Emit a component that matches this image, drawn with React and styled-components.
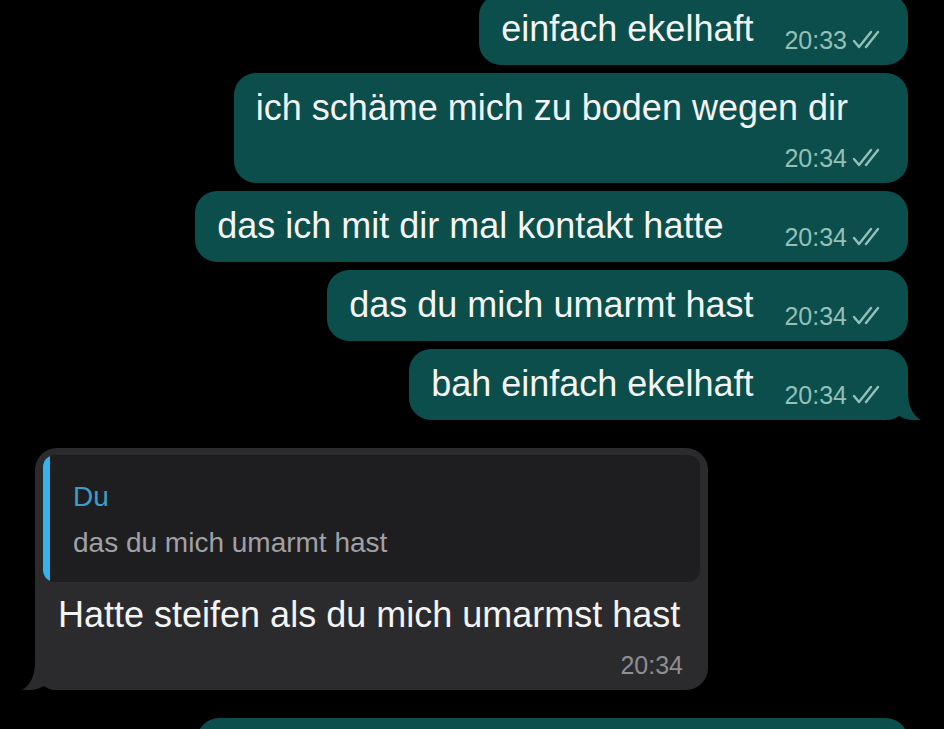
import React from 'react';
import styled, { createGlobalStyle } from 'styled-components';

const Global = createGlobalStyle`
  html, body {
    margin: 0;
    padding: 0;
    background: #000;
    height: 729px;
    overflow: hidden;
  }
  body {
    font-family: "Liberation Sans", Arial, sans-serif;
    -webkit-font-smoothing: antialiased;
  }
`;

// chat column
const Chat = styled.div`
  display: flex;
  flex-direction: column;
  gap: 8px;
  margin-top: -6px;
  padding: 0 36px 0 22px;
`;

const Row = styled.div`
  display: flex;
  justify-content: ${p => (p.$in ? 'flex-start' : 'flex-end')};
  margin-top: ${p => p.$spaced ? '20px' : '0'};
`;

// outgoing bubble
const Bubble = styled.div`
  position: relative;
  display: flex;
  flex-direction: ${p => (p.$stacked ? 'column' : 'row')};
  align-items: flex-end;
  background: #0b4e4b;
  border-radius: 22px;
  padding: 17px 23px 13px 22px;
  min-height: ${p => p.$minH || 0}px;
  box-sizing: border-box;
  width: ${p => p.$w ? p.$w + 'px' : 'auto'};
`;

const Text = styled.div`
  color: #f4f4f4;
  font-size: 36px;
  line-height: 36px;
  padding-bottom: ${p => (p.$stacked ? '20px' : '5px')};
  padding-right: ${p => (p.$stacked ? '37px' : '0')};
  align-self: flex-start;
  white-space: nowrap;
`;

const Meta = styled.div`
  display: flex;
  align-items: center;
  gap: 4px;
  margin-left: ${p => p.$gap || 28}px;
  color: ${p => (p.$in ? '#8e8e93' : '#93c0b9')};
  font-size: 25px;
  line-height: 24px;
  white-space: nowrap;
`;

const Tail = styled.svg`
  position: absolute;
  bottom: 0;
  ${p => (p.$left ? 'left: -13px;' : 'right: -13px;')}
`;

// incoming bubble with quoted reply
const InBubble = styled.div`
  position: relative;
  display: flex;
  flex-direction: column;
  background: #2b2b2d;
  border-radius: 22px;
  padding: 7px 8px 13px 8px;
  width: 673px;
  box-sizing: border-box;
  margin-left: 13px;
`;

const Quote = styled.div`
  position: relative;
  background: #1e1e20;
  border-radius: 12px;
  padding: 27px 20px 25px 30px;
  overflow: hidden;
  &::before {
    content: '';
    position: absolute;
    left: 0;
    top: 0;
    bottom: 0;
    width: 7px;
    background: #35b4ec;
  }
`;

const QuoteName = styled.div`
  color: #3c9ec8;
  font-size: 28px;
  line-height: 30px;
`;

const QuoteText = styled.div`
  color: #a0a0a5;
  font-size: 28px;
  line-height: 28px;
  margin-top: 17px;
`;

const InText = styled.div`
  color: #f4f4f4;
  font-size: 36px;
  line-height: 36px;
  margin: 15px 0 0 15px;
  white-space: nowrap;
`;

const InTime = styled(Meta)`
  align-self: flex-end;
  margin: 20px 17px 0 0;
`;

const Checks = () => (
  <svg width="34" height="20" viewBox="0 0 34 20" fill="none" stroke="currentColor" strokeWidth="2.4" strokeLinecap="round" strokeLinejoin="round">
    <path d="M3 11 L8 17 L20 2" />
    <path d="M15 17 L27 2" />
  </svg>
);

const TailOut = () => (
  <Tail width="33" height="28" viewBox="0 0 33 28">
    <path d="M0 0 H20 C20 13 24 23 33 28 C24 29 16 27 11 24 C8 26 4 28 0 28 Z" fill="#0b4e4b" />
  </Tail>
);

const TailIn = () => (
  <Tail $left width="33" height="28" viewBox="0 0 33 28">
    <path d="M33 0 H13 C13 13 9 23 0 28 C9 29 17 27 22 24 C25 26 29 28 33 28 Z" fill="#2b2b2d" />
  </Tail>
);

const outgoing = [
  { text: 'einfach ekelhaft', time: '20:33', gap: 31 },
  { text: 'ich schäme mich zu boden wegen dir', time: '20:34', stacked: true },
  { text: 'das ich mit dir mal kontakt hatte', time: '20:34', gap: 61 },
  { text: 'das du mich umarmt hast', time: '20:34', gap: 31 },
  { text: 'bah einfach ekelhaft', time: '20:34', gap: 31, tail: true },
];

const App = () => {
  return (
    <>
      <Global />
      <Chat>
        {outgoing.map((m, i) => (
          <Row key={i}>
            <Bubble $stacked={m.stacked}>
              <Text $stacked={m.stacked}>{m.text}</Text>
              <Meta $gap={m.stacked ? 0 : m.gap}>
                <span>{m.time}</span>
                <Checks />
              </Meta>
              {m.tail && <TailOut />}
            </Bubble>
          </Row>
        ))}
        <Row $in $spaced>
          <InBubble>
            <Quote>
              <QuoteName>Du</QuoteName>
              <QuoteText>das du mich umarmt hast</QuoteText>
            </Quote>
            <InText>Hatte steifen als du mich umarmst hast</InText>
            <InTime $in>20:34</InTime>
            <TailIn />
          </InBubble>
        </Row>
        <Row $spaced>
          <Bubble $w={711} $minH={80} />
        </Row>
      </Chat>
    </>
  );
};

export default App;
